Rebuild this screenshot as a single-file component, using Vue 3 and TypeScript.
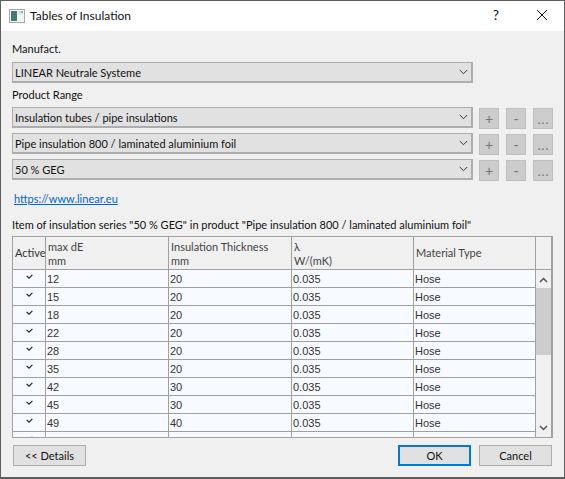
<script setup lang="ts">
const combos = ['Insulation tubes / pipe insulations', 'Pipe insulation 800 / laminated aluminium foil', '50 % GEG']
const rows: [string, string][] = [
  ['12', '20'], ['15', '20'], ['18', '20'], ['22', '20'], ['28', '20'],
  ['35', '20'], ['42', '30'], ['45', '30'], ['49', '40'], ['54', '40'],
]
</script>

<template>
  <div class="window">
    <header class="titlebar">
      <svg class="appicon" width="16" height="14" viewBox="0 0 16 14">
        <rect x="0.5" y="0.5" width="15" height="13" fill="#f4f4f4" stroke="#a8a8a8" />
        <rect x="2" y="2" width="6" height="10" fill="#3f7f73" />
        <rect x="2" y="2" width="6" height="3" fill="#54707f" />
        <rect x="9" y="2" width="5" height="3" fill="#d3dde3" />
        <rect x="12" y="2" width="2" height="2" fill="#8fb4c8" />
      </svg>
      <span class="title">Tables of Insulation</span>
      <span class="help">?</span>
      <svg class="close" width="12" height="12" viewBox="0 0 12 12">
        <path d="M1 1 L11 11 M11 1 L1 11" stroke="#111" stroke-width="1" fill="none" />
      </svg>
    </header>
    <main class="body">
      <label class="lab first">Manufact.</label>
      <div class="combo wide"><span>LINEAR Neutrale Systeme</span>
        <svg class="chev" width="9" height="6" viewBox="0 0 9 6"><path d="M0.8 1 L4.5 4.7 L8.2 1" /></svg>
      </div>
      <label class="lab second">Product Range</label>
      <div class="rangerows">
        <div v-for="c in combos" :key="c" class="comborow">
          <div class="combo wide"><span>{{ c }}</span>
            <svg class="chev" width="9" height="6" viewBox="0 0 9 6"><path d="M0.8 1 L4.5 4.7 L8.2 1" /></svg>
          </div>
          <div class="mini">+</div>
          <div class="mini">-</div>
          <div class="mini">...</div>
        </div>
      </div>
      <a class="link">https://www.linear.eu</a>
      <p class="caption">Item of insulation series "50 % GEG" in product "Pipe insulation 800 / laminated aluminium foil"</p>
      <div class="table">
        <div class="thead">
          <div class="th c0 center">Active</div>
          <div class="th c1">max dE<br />mm</div>
          <div class="th c2">Insulation Thickness<br />mm</div>
          <div class="th c3">λ<br />W/(mK)</div>
          <div class="th c4 center-v">Material Type</div>
          <div class="th c5"></div>
        </div>
        <div class="tbody">
          <div class="rows">
            <div v-for="r in rows" :key="r[0]" class="tr">
              <div class="td c0 chk">
                <svg width="7" height="6" viewBox="0 0 7 6"><path d="M0.6 1.8 L3 4.2 L6.4 0.8" /></svg>
              </div>
              <div class="td c1">{{ r[0] }}</div>
              <div class="td c2">{{ r[1] }}</div>
              <div class="td c3">0.035</div>
              <div class="td c4">Hose</div>
            </div>
          </div>
          <div class="scrollbar">
            <svg width="9" height="6" viewBox="0 0 9 6"><path d="M1 5 L4.5 1.5 L8 5" /></svg>
            <div class="thumb"></div>
            <svg class="down" width="9" height="6" viewBox="0 0 9 6"><path d="M1 1 L4.5 4.5 L8 1" /></svg>
          </div>
        </div>
      </div>
      <footer class="actions">
        <button class="btn">&lt;&lt; Details</button>
        <button class="btn ok">OK</button>
        <button class="btn">Cancel</button>
      </footer>
    </main>
  </div>
</template>

<style>
html, body { margin: 0; background: #6a6a6a; }
</style>

<style scoped>
.window {
  box-sizing: border-box;
  width: 565px;
  height: 479px;
  border: 1px solid #5e5e5e;
  border-bottom-width: 2px;
  background: #f0f0f0;
  font-family: Lato, "Open Sans", sans-serif;
  font-size: 11px;
  color: #111;
  overflow: hidden;
  display: flex;
  flex-direction: column;
}
.titlebar {
  height: 30px;
  flex: none;
  background: #fff;
  display: flex;
  align-items: center;
  padding-left: 8px;
}
.appicon { flex: none; margin-top: -1px; }
.title { margin-left: 5px; font-size: 12px; margin-top: -1px; }
.help { margin-left: auto; font-size: 14px; margin-top: -3px; }
.close { margin: -2px 16px 0 37px; }
.body { flex: 1; padding: 0 11px; display: flex; flex-direction: column; min-height: 0; }
.lab { display: block; line-height: 16px; }
.first { margin-top: 10px; }
.second { margin-top: 4px; }
.combo {
  box-sizing: border-box;
  height: 21px;
  width: 461px;
  border: 1px solid #adadad;
  border-width: 1px 2px 2px 1px;
  background: #e1e1e1;
  display: flex;
  align-items: center;
  justify-content: space-between;
  padding: 0 3px 0 2px;
  flex: none;
}
.first + .combo { margin-top: 5px; }
.chev { flex: none; margin-top: -1px; }
.chev path { fill: none; stroke: #333; stroke-width: 1; }
.rangerows { margin-top: 4px; display: flex; flex-direction: column; gap: 4px; }
.comborow { display: flex; align-items: flex-start; }
.mini {
  box-sizing: border-box;
  width: 20px;
  height: 21px;
  margin: 1px 0 0 7px;
  background: #cccccc;
  border: 1px solid #bfbfbf;
  color: #74747c;
  font-family: "Liberation Sans", sans-serif;
  font-size: 14px;
  display: flex;
  align-items: center;
  justify-content: center;
}
.comborow .combo + .mini { margin-left: 6px; }
.link {
  margin: 9px 0 0 2px;
  color: #0066cc;
  text-decoration: underline;
  line-height: 17px;
  align-self: flex-start;
}
.caption { margin: 10px 0 0; line-height: 16px; white-space: nowrap; }
.table {
  box-sizing: border-box;
  margin-top: 3px;
  height: 202px;
  width: 541px;
  border: 1px solid #a0a0a0;
  border-width: 1px 2px 1px 1px;
  background: #f7fbff;
  display: flex;
  flex-direction: column;
  flex: none;
  overflow: hidden;
  font-family: "Liberation Sans", Arial, sans-serif;
  font-size: 11px;
  color: #333;
}
.thead { display: flex; height: 33px; flex: none; background: #f0f0f0; border-bottom: 1px solid #a0a0a0; box-sizing: border-box; }
.th { box-sizing: border-box; padding-left: 2px; border-right: 1px solid #a0a0a0; line-height: 14px; padding-top: 3px; color: #444; font-family: Lato, sans-serif; font-size: 11px; }
.center { display: flex; align-items: center; padding: 0 0 0 2px; color: #333; }
.center-v { display: flex; align-items: center; padding-top: 0; }
.c0 { width: 33px; flex: none; }
.c1 { width: 123px; flex: none; }
.c2 { width: 123px; flex: none; }
.c3 { width: 122px; flex: none; }
.c4 { width: 122px; flex: none; }
.c5 { flex: 1; border-right: none; }
.tbody { flex: 1; display: flex; min-height: 0; }
.rows { width: 523px; flex: none; overflow: hidden; }
.tr { display: flex; height: 18px; box-sizing: border-box; border-bottom: 1px solid #a0a0a0; background: #f7fbff; }
.td { box-sizing: border-box; border-right: 1px solid #a0a0a0; line-height: 19px; padding-left: 1px; }
.chk { display: flex; align-items: center; justify-content: center; padding: 0 0 3px; }
.chk path { fill: none; stroke: #222; stroke-width: 1.2; }
.scrollbar { flex: 1; background: #f0f0f0; display: flex; flex-direction: column; align-items: center; padding-top: 7px; box-sizing: border-box; }
.scrollbar path { fill: none; stroke: #555; stroke-width: 1.5; }
.thumb { width: 15px; height: 67px; background: #cdcdcd; margin-top: 5px; }
.down { margin-top: auto; margin-bottom: 6px; }
.actions { display: flex; align-items: flex-start; margin-top: 7px; padding: 0 1px; }
.btn {
  box-sizing: border-box;
  height: 21px;
  background: #e1e1e1;
  border: 1px solid #adadad;
  font: inherit;
  color: #111;
  padding: 0;
  width: 73px;
}
.ok { margin-left: auto; border: 2px solid #0078d7; margin-right: 8px; }
</style>
